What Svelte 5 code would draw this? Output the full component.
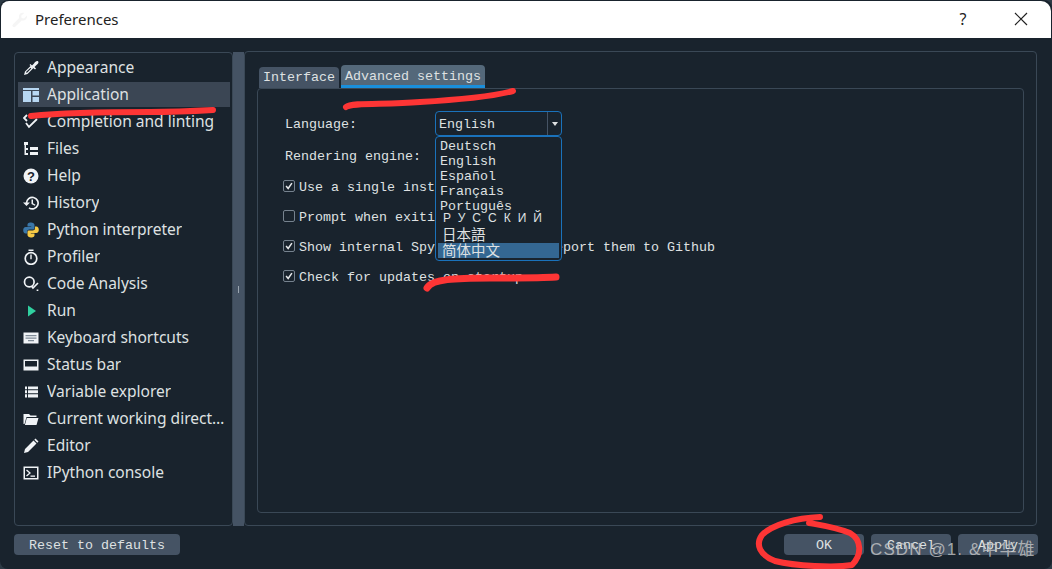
<script>
  const nav = [
    'Appearance','Application','Completion and linting','Files','Help','History','Python interpreter','Profiler','Code Analysis','Run','Keyboard shortcuts','Status bar','Variable explorer','Current working directory','Editor','IPython console'
  ];
  const langs = ['Deutsch','English','Español','Français','Português','Русский','日本語','简体中文'];
  const checks = [
    { text: 'Use a single instance', on: true },
    { text: 'Prompt when exiting', on: false },
    { text: 'Show internal Spyder errors to report them to Github', on: true },
    { text: 'Check for updates on startup', on: true }
  ];
</script>

<div class="window">
  <header class="title">
    <svg class="wrench" viewBox="0 0 16 16"><path d="M15 3.5 12 6.5 9.6 6 9.2 3.8 12.2 1C9.8.2 7.300 1.500 7 4c-.1.8 0 1.500.2 2L1 12.200c-.8.800-.8 1.800 0 2.500s1.800.6 2.500-.1L9.700 8.500C12.500 9.300 15.500 7 15 3.500Z" fill="#f5f5f5"/></svg>
    <span class="title-text">Preferences</span>
    <span class="help">?</span>
    <svg class="close" viewBox="0 0 14 14"><path d="M1 1 13 13M13 1 1 13" stroke="#222" stroke-width="1.200" fill="none"/></svg>
  </header>

  <main class="body">
    <nav class="sidebar">
      {#each nav as item, i}
        <div class="nav-row" class:selected={i === 1}>
          <svg class="icon" viewBox="0 0 16 16">
            {#if i === 0}
              <path d="M1 15 2 11.500 8 5.500 10.500 8 4.500 14Z M3 12 3.800 13 8.300 8.500 7.500 7.700Z" fill="#f0f3f6" fill-rule="evenodd"/>
              <path d="M7.500 4 9 5.500 11 3.500C12 1.500 14 .5 15 1.300s.4 2.700-1.500 3.700L11.500 7 13 8.500 12 9.500 6.500 5Z" fill="#f0f3f6"/>
            {:else if i === 1}
              <path d="M0 1H16V3H0ZM0 4H8V15H0ZM9.500 4H16V8.500H9.500ZM9.500 10H16V15H9.500Z" fill="#b7d7f2"/>
            {:else if i === 2}
              <path d="M4 1 1 4 4 7M3 9l3 4 8-8" stroke="#f0f3f6" stroke-width="1.800" fill="none"/>
            {:else if i === 3}
              <path d="M1 1H5V4H3V7H5V9H3V12H5V14H1.500V4H1ZM7 6H15V9H7ZM7 11H15V14H7Z" fill="#f0f3f6"/>
            {:else if i === 4}
              <circle cx="8" cy="8" r="7.500" fill="#f0f3f6"/>
              <text x="8" y="12.500" class="q">?</text>
            {:else if i === 5}
              <path d="M3.500 8A5.800 5.800 0 1 1 6 12.900" stroke="#f0f3f6" stroke-width="1.700" fill="none"/>
              <path d="M0 7.500H7L3.500 11Z M8.500 4.500H10V8.200L12.500 9.700 11.800 10.800 8.500 9Z" fill="#f0f3f6"/>
            {:else if i === 6}
              <path d="M8 .5C5 .5 4.500 1.800 4.500 3V4.500H8.200V5H2.800C1 5 .2 6.500.2 8.300S1 11.500 2.800 11.500H4.200V9.700C4.200 8.300 5.200 7.500 6.500 7.500H10C11 7.500 11.500 6.800 11.500 6V3C11.500 1.500 10 .5 8 .5Z" fill="#3a76a8"/>
              <path d="M8 15.500C11 15.500 11.500 14.200 11.500 13V11.500H7.800V11H13.200C15 11 15.800 9.500 15.800 7.700S15 4.500 13.200 4.500H12V6.300C12 7.700 11 8.500 9.700 8.500H6C5 8.500 4.500 9.200 4.500 10V13C4.500 14.500 6 15.500 8 15.500Z" fill="#f6c945"/>
            {:else if i === 7}
              <circle cx="8" cy="9.500" r="5.800" stroke="#f0f3f6" stroke-width="1.700" fill="none"/>
              <path d="M5.500 .5H10.500V2H5.500ZM7.300 5.500H8.700V10.200H7.300Z" fill="#f0f3f6"/>
            {:else if i === 8}
              <circle cx="6.300" cy="6" r="4.800" stroke="#f0f3f6" stroke-width="1.700" fill="none"/>
              <path d="M8.500 10 10 12 15 7M14.500 13.500v1.500" stroke="#f0f3f6" stroke-width="1.700" fill="none"/>
            {:else if i === 9}
              <path d="M5 2.500 13 8 5 13.500Z" fill="#30d0a0"/>
            {:else if i === 10}
              <path d="M.5 2.500H15.500V13.500H.5Z" fill="#f0f3f6"/>
              <path d="M2.500 5H13.500V6.300H2.500ZM2.500 7.500H13.500V8.800H2.500ZM5 10H11V11.300H5Z" fill="#7f8b97"/>
            {:else if i === 11}
              <path d="M.5 2.500H15.500V13.500H.5ZM2 4V9.500H14V4Z" fill="#f0f3f6" fill-rule="evenodd"/>
            {:else if i === 12}
              <path d="M2 2.500H4V5.300H2ZM5 2.500H15V5.300H5ZM2 6.300H4V9.300H2ZM5 6.300H15V9.300H5ZM2 10.300H4V13.500H2ZM5 10.300H15V13.500H5Z" fill="#f0f3f6"/>
            {:else if i === 13}
              <path d="M.5 3H6L7.500 4.500H13.500V6H3.500L1.500 13H.5Z M3.800 7H15.500L13.500 14H1.900Z" fill="#f0f3f6"/>
            {:else if i === 14}
              <path d="M1 15 2 11 10.500 2.500 13.500 5.500 5 14ZM11.300 1.700 12.500.5 15.500 3.500 14.300 4.700Z" fill="#f0f3f6"/>
            {:else}
              <path d="M.5 1.500H15.500V14.500H.5ZM2 3V13H14V3Z" fill="#f0f3f6" fill-rule="evenodd"/>
              <path d="M3.500 5 7 8 3.500 11" stroke="#f0f3f6" stroke-width="1.300" fill="none"/>
              <path d="M7.500 10.500H12V11.800H7.500Z" fill="#f0f3f6"/>
            {/if}
          </svg>
          <span class="nav-text">{item}</span>
        </div>
      {/each}
    </nav>

    <div class="splitter"><span class="grip"></span></div>

    <section class="content">
      <div class="tabs">
        <div class="tab">Interface</div>
        <div class="tab active">Advanced settings</div>
      </div>
      <div class="pane">
        <div class="row field first">
          <span class="label">Language:</span>
          <div class="combo-wrap">
            <div class="combo">
              <span class="combo-value">English</span>
              <span class="combo-arrow"><span class="tri"></span></span>
            </div>
            <ul class="popup">
              {#each langs as lang, i}
                <li class:ru={i === 5} class:cjk={i > 5} class:sel={i === 7}>{lang}</li>
              {/each}
            </ul>
          </div>
        </div>
        <div class="row field second"><span class="label">Rendering engine:</span></div>
        {#each checks as c}
          <div class="row check">
            <span class="box">
              {#if c.on}
                <svg viewBox="0 0 12 12"><path d="M2.500 6 5 9 9.500 2.500" stroke="#e6e8ea" stroke-width="1.800" fill="none"/></svg>
              {/if}
            </span>
            <span class="check-text">{c.text}</span>
          </div>
        {/each}
      </div>
    </section>
  </main>

  <footer class="foot">
    <button class="btn reset">Reset to defaults</button>
    <span class="spacer"></span>
    <button class="btn">OK</button>
    <button class="btn">Cancel</button>
    <button class="btn">Apply</button>
  </footer>

  <svg class="ink" viewBox="0 0 1052 569">
    <path d="M31 116C70 112 110 112 150 112 175 112 195 111 213 110" />
    <path d="M346 107C352 102 385 105 420 102 455 100 490 97 513 91" />
    <path class="thick" d="M427 288C432 279 455 278 490 278 515 278 540 278 556 277" />
    <path d="M820 517C795 518 772 525 762 535 755 545 760 555 775 561 795 566 835 568 852 565 862 555 862 540 850 533 835 527 820 525 809 523" />
  </svg>
  <div class="mark">CSDN @1. &amp;中华雄</div>
</div>

<style>
  :global(body) {
    margin: 0;
    background: #2d3a45;
  }
  .window {
    position: relative;
    box-sizing: border-box;
    width: 1052px;
    height: 569px;
    padding: 1px 0 0 1px;
    display: flex;
    flex-direction: column;
    overflow: hidden;
    background: #19232d;
    border-radius: 8px;
    font-family: "Liberation Mono", monospace;
    font-size: 13.33px;
    color: #dfe1e2;
  }
  .title {
    flex: 0 0 37px;
    margin-right: 1px;
    display: flex;
    align-items: center;
    background: #fff;
    color: #222;
    font-family: "Noto Sans", sans-serif;
    font-size: 15px;
    border-radius: 8px 10px 0 0;
    padding-left: 11px;
  }
  .wrench { width: 16px; height: 16px; margin-right: 7px; }
  .title-text { flex: 1; padding-bottom: 2px; }
  .help { width: 16px; font-size: 16px; margin-right: 43px; padding-bottom: 2px; text-align: center; }
  .close { width: 14px; height: 14px; margin-right: 23px; padding-bottom: 2px; }

  .body {
    flex: 0 0 474px;
    margin-top: 14px;
    margin-left: 13px;
    width: 1023px;
    display: flex;
  }
  .sidebar {
    box-sizing: border-box;
    width: 219px;
    height: 474px;
    padding: 2px 2px 0 3px;
    border: 1px solid #3a4856;
    border-radius: 4px;
    display: flex;
    flex-direction: column;
    gap: 2px;
    font-family: "Noto Sans", sans-serif;
    font-size: 15.55px;
    color: #dfe1e2;
  }
  .nav-row {
    flex: 0 0 25px;
    display: flex;
    align-items: center;
    padding-left: 5px;
    min-width: 0;
  }
  .nav-row.selected { background: #3b4654; }
  .icon { flex: 0 0 16px; width: 16px; height: 16px; margin-right: 8px; }
  .q { font: bold 13px "Liberation Sans", sans-serif; text-anchor: middle; fill: #19232d; }
  .nav-text {
    min-width: 0;
    white-space: nowrap;
    overflow: hidden;
    text-overflow: ellipsis;
    padding-bottom: 2px;
  }
  .splitter {
    flex: 0 0 11px;
    background: #455364;
    display: flex;
    align-items: center;
    justify-content: center;
  }
  .grip { width: 1px; height: 7px; background: #9aa5b0; }

  .content {
    flex: 1;
    box-sizing: border-box;
    border: 1px solid #3a4856;
    border-radius: 4px;
    margin-top: -1px;
    height: 475px;
    padding: 13px 12px 12px 12px;
    display: flex;
    flex-direction: column;
  }
  .tabs {
    flex: 0 0 23px;
    display: flex;
    align-items: flex-end;
    gap: 2px;
    padding-left: 2px;
  }
  .tab {
    box-sizing: border-box;
    height: 21px;
    padding: 2px 4px 0;
    background: #455364;
    border-radius: 4px 4px 0 0;
    color: #dfe1e2;
    line-height: 17px;
  }
  .tab.active {
    height: 23px;
    padding-top: 3px;
    background: #54687a;
    border-bottom: 3px solid #1a8fdc;
  }
  .pane {
    flex: 1;
    border: 1px solid #3a4856;
    border-radius: 4px;
    padding: 0 0 0 25px;
    display: flex;
    flex-direction: column;
  }
  .row { display: flex; align-items: center; height: 30px; white-space: nowrap; }
  .field.first { margin-top: 20px; height: 29px; }
  .field.second { margin-top: 3px; height: 30px; }
  .label { box-sizing: border-box; width: 152px; padding: 2px 0 0 2px; flex: none; }
  .second .label { padding-top: 0; }
  .check-text { padding-top: 2px; }
  .box {
    box-sizing: border-box;
    width: 12px;
    height: 12px;
    margin-right: 4px;
    border: 1px solid #76828e;
    border-radius: 2px;
    display: block;
    flex: none;
  }
  .box svg { display: block; width: 10px; height: 10px; }

  .combo-wrap { position: relative; width: 127px; }
  .combo {
    box-sizing: border-box;
    height: 25px;
    border: 1px solid #1a72bb;
    border-radius: 4px;
    display: flex;
    align-items: center;
    background: #19232d;
  }
  .combo-value { flex: 1; padding: 2px 0 0 3px; }
  .combo-arrow {
    width: 13px;
    height: 23px;
    border-left: 1px solid #455364;
    display: flex;
    align-items: center;
    justify-content: center;
  }
  .tri {
    width: 0;
    height: 0;
    border-left: 3px solid transparent;
    border-right: 3px solid transparent;
    border-top: 4px solid #dfe1e2;
  }
  .popup {
    position: absolute;
    left: 0;
    top: 25px;
    box-sizing: border-box;
    width: 127px;
    height: 125px;
    margin: 0;
    padding: 2px 2px 0;
    list-style: none;
    border: 1px solid #1a72bb;
    border-radius: 4px;
    background: #19232d;
    z-index: 2;
  }
  .popup li { height: 15px; line-height: 15px; padding-left: 2px; }
  .popup li.ru {
    margin-top: -2px;
    height: 13px;
    line-height: 13px;
    padding-left: 5px;
    font-family: "Liberation Sans", sans-serif;
    font-size: 12px;
    letter-spacing: 7px;
    text-transform: uppercase;
    white-space: nowrap;
  }
  .popup li.cjk {
    height: 18px;
    line-height: 18px;
    padding-left: 4px;
    font-family: "Noto Sans CJK SC", sans-serif;
    font-size: 14.5px;
  }
  .popup li.sel { background: #346792; height: 15px; line-height: 13px; }

  .foot {
    flex: 0 0 21px;
    margin: 8px 14px 0 13px;
    display: flex;
    gap: 7px;
  }
  .spacer { flex: 1; }
  .btn {
    width: 80px;
    height: 21px;
    padding: 1px 0 0;
    border: 0;
    border-radius: 4px;
    background: #455364;
    color: #dfe1e2;
    font: inherit;
  }
  .btn.reset { width: 166px; }

  .ink {
    position: absolute;
    left: 0;
    top: 0;
    width: 1052px;
    height: 569px;
    z-index: 3;
    fill: none;
    stroke: #fd3535;
    stroke-width: 6;
    stroke-linecap: round;
    stroke-linejoin: round;
    pointer-events: none;
  }
  .ink .thick { stroke-width: 7; }
  .mark {
    position: absolute;
    left: 870px;
    top: 535px;
    z-index: 4;
    font-family: "Liberation Sans", "Noto Sans CJK SC", sans-serif;
    font-size: 17px;
    letter-spacing: 1.1px;
    color: rgba(200, 200, 200, 0.8);
    white-space: nowrap;
  }
</style>
